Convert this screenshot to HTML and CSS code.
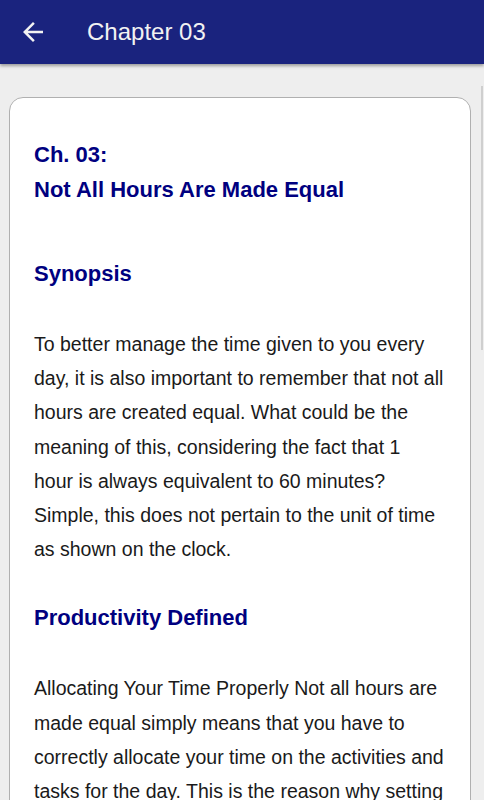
FILE: index.html
```html
<!DOCTYPE html>
<html>
<head>
<meta charset="UTF-8">
<link rel="stylesheet" href="styles.css">
</head>
<body>

    <div class="toolbar">
        <svg class="back" viewBox="0 0 24 24" width="30" height="30"><path fill="#f2f2f2" d="M20 11H7.83l5.59-5.59L12 4l-8 8 8 8 1.41-1.41L7.83 13H20v-2z"/></svg>
        <span class="title">Chapter 03</span>
    </div>

    <div class="page">
        <div class="card">
            <h2 class="chapter">Ch. 03:<br>Not All Hours Are Made Equal</h2>

            <h3>Synopsis</h3>
            <p>To better manage the time given to you every day, it is also important to remember that not all hours are created equal. What could be the meaning of this, considering the fact that 1 hour is always equivalent to 60 minutes? Simple, this does not pertain to the unit of time as shown on the clock.</p>

            <h3>Productivity Defined</h3>
            <p>Allocating Your Time Properly Not all hours are made equal simply means that you have to correctly allocate your time on the activities and tasks for the day. This is the reason why setting your priorities is important so that you can focus on the things that matter the most.</p>
        </div>
    </div>

    <div class="scrollbar"></div>

</body>
</html>
```

FILE: styles.css
```css
body {
    margin: 0;
    height: 800px;
    overflow: hidden;
    background: #eeeeee;
    font-family: 'Liberation Sans', Arial, sans-serif;
}

.toolbar {
    height: 64px;
    background: #1a237e;
    display: flex;
    align-items: center;
    padding-left: 18px;
    box-shadow: 0 2px 3px rgba(0, 0, 0, 0.35);
    position: relative;
}
.toolbar .back {
    display: block;
    margin-top: -1px;
}
.toolbar .title {
    color: #f2f2f2;
    font-size: 24px;
    margin-left: 39px;
}

.page {
    padding: 33px 13px 0 9px;
}

.card {
    background: white;
    border: 1px solid #b0b0b0;
    border-radius: 14px;
    padding: 39px 26px 0 24px;
    height: 800px;
}

.card h2, .card h3 {
    color: #000080;
    font-size: 22px;
    font-weight: bold;
    line-height: 35px;
    margin: 0 0 36px;
}
.card h2.chapter {
    margin-bottom: 49px;
}

.card p {
    color: #1a1a1a;
    font-size: 19.5px;
    line-height: 34.2px;
    margin: 0 0 34px;
}

.scrollbar {
    position: absolute;
    right: 1px;
    top: 86px;
    width: 2px;
    height: 264px;
    background: #cfcfcf;
}
```
